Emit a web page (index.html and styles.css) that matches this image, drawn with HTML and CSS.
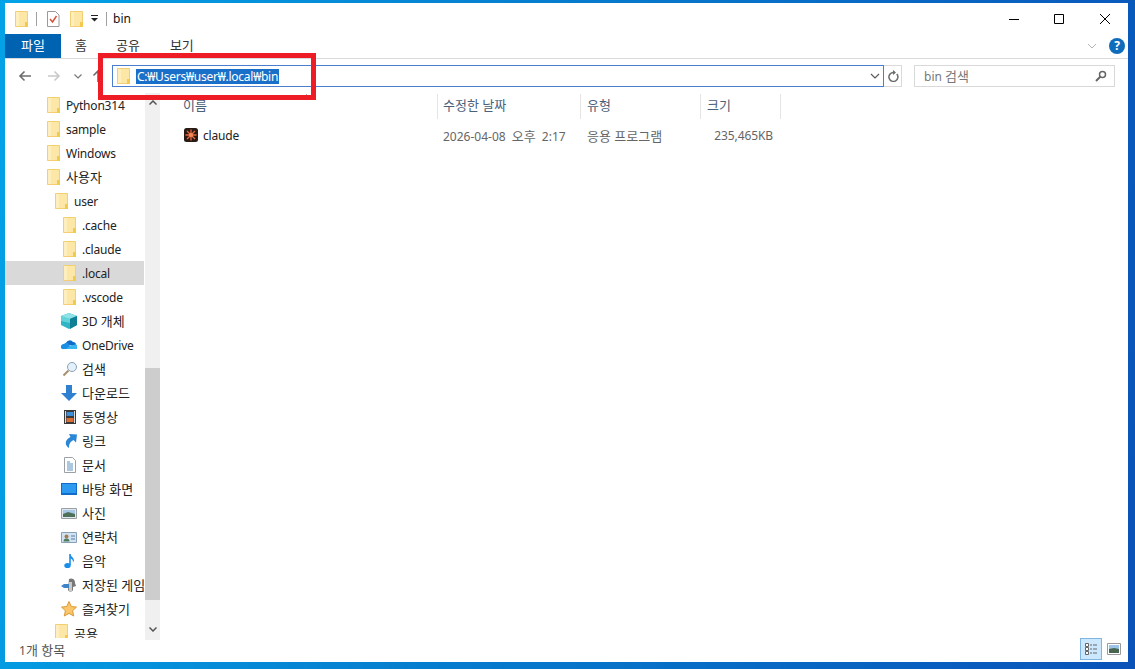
FILE: index.html
```html
<!DOCTYPE html>
<html lang="ko">
<head>
<meta charset="utf-8">
<title>bin</title>
<link rel="stylesheet" href="styles.css">
</head>
<body>
<svg class="defs" width="0" height="0" aria-hidden="true">
  <symbol id="folder" viewBox="0 0 16 16">
    <path d="M1.500.5h12v15h-12z" fill="#fde7a6" stroke="#f1cf72"/>
    <path d="M11 11h3v5h-3z" fill="#f5c94f"/>
    <path d="M2 1h3v14H2z" fill="#ffefbf"/>
  </symbol>
</svg>
<div class="window">
  <header class="titlebar">
    <svg class="ico folder-t"><use href="#folder"/></svg>
    <span class="tsep"></span>
    <svg class="ico doc-t" viewBox="0 0 16 16"><path d="M2.500.5h8l3.500 3.500v11.500H2.500z" fill="#fff" stroke="#9a9a9a"/><path d="M5 8l2.500 3L11.500 5" fill="none" stroke="#d8503a" stroke-width="1.400"/></svg>
    <svg class="ico folder-t"><use href="#folder"/></svg>
    <svg class="qdrop" viewBox="0 0 9 7"><path d="M1 0h7v1H1z" fill="#222"/><path d="M1 3h7L4.500 6.500z" fill="#222"/></svg>
    <span class="tsep"></span>
    <span class="wintitle">bin</span>
    <div class="winctl">
      <svg class="ctl" viewBox="0 0 10 10"><path d="M0 5.500h10" stroke="#000" fill="none"/></svg>
      <svg class="ctl ctl-max" viewBox="0 0 10 10"><path d="M.5.500h9v9h-9z" stroke="#000" fill="none"/></svg>
      <svg class="ctl" viewBox="0 0 10 10"><path d="M0 0l10 10M10 0L0 10" stroke="#000" fill="none"/></svg>
    </div>
  </header>
  <nav class="ribbon">
    <span class="tab tab-file ko">파일</span>
    <span class="tab tab-home ko">홈</span>
    <span class="tab tab-share ko">공유</span>
    <span class="tab tab-view ko">보기</span>
    <svg class="rib-chev" viewBox="0 0 10 6"><path d="M1 1l4 4 4-4" fill="none" stroke="#b4b4b4"/></svg>
    <span class="help">?</span>
  </nav>
  <div class="addrbar">
    <svg class="navbtn back" viewBox="0 0 14 12"><path d="M13 6H2M6.500 1.500L2 6l4.500 4.500" fill="none" stroke="#6d6d6d" stroke-width="1.600"/></svg>
    <svg class="navbtn fwd" viewBox="0 0 14 12"><path d="M1 6h11M7.500 1.500L12 6l-4.500 4.500" fill="none" stroke="#c9c9c9" stroke-width="1.600"/></svg>
    <svg class="navbtn down" viewBox="0 0 8 5"><path d="M.5.500L4 4 7.500.5" fill="none" stroke="#777" stroke-width="1.200"/></svg>
    <svg class="navbtn up" viewBox="0 0 12 14"><path d="M6 13V2M1.500 6.500L6 2l4.500 4.500" fill="none" stroke="#6d6d6d" stroke-width="1.600"/></svg>
    <div class="addr">
      <svg class="ico folder-a"><use href="#folder"/></svg>
      <span class="path">C:₩Users₩user₩.local₩bin</span>
      <svg class="addr-chev" viewBox="0 0 10 6"><path d="M1 1l4 4 4-4" fill="none" stroke="#555" stroke-width="1.100"/></svg>
    </div>
    <div class="refresh">
      <svg viewBox="0 0 12 12" class="ref-ico"><path d="M9.800 4A4.500 4.500 0 1 1 6 2.500H8" fill="none" stroke="#6d6d6d" stroke-width="1.500"/><path d="M6 0l3 2.500L6 5z" fill="#6d6d6d"/></svg>
    </div>
    <div class="search">
      <span class="search-text">bin <span class="ko">검색</span></span>
      <svg class="search-ico" viewBox="0 0 12 12"><circle cx="7.500" cy="4.500" r="3" fill="none" stroke="#666" stroke-width="1.500"/><path d="M5.500 6.500L1 11" stroke="#666" stroke-width="2"/></svg>
    </div>
  </div>
  <div class="main">
    <aside class="nav">
      <ul class="tree">
        <li class="row l1"><svg class="ico"><use href="#folder"/></svg><span class="lat">Python314</span></li>
        <li class="row l1"><svg class="ico"><use href="#folder"/></svg><span class="lat">sample</span></li>
        <li class="row l1"><svg class="ico"><use href="#folder"/></svg><span class="lat">Windows</span></li>
        <li class="row l1"><svg class="ico"><use href="#folder"/></svg><span class="ko">사용자</span></li>
        <li class="row l2"><svg class="ico"><use href="#folder"/></svg><span class="lat">user</span></li>
        <li class="row l3"><svg class="ico"><use href="#folder"/></svg><span class="lat">.cache</span></li>
        <li class="row l3"><svg class="ico"><use href="#folder"/></svg><span class="lat">.claude</span></li>
        <li class="row l3 sel"><svg class="ico"><use href="#folder"/></svg><span class="lat">.local</span></li>
        <li class="row l3"><svg class="ico"><use href="#folder"/></svg><span class="lat">.vscode</span></li>
        <li class="row l3"><svg class="ico wide" viewBox="0 0 16 16"><path d="M8 0l8 3v9l-8 4-8-4V3z" fill="#2fb5c4"/><path d="M8 0l8 3-8 3-8-3z" fill="#8fe3e6"/><path d="M9 6l7-3v9l-7 4z" fill="#0f7f95"/><path d="M0 3l9 3v4L0 8z" fill="#63d3da"/></svg><span class="mix">3D <span class="ko">개체</span></span></li>
        <li class="row l3"><svg class="ico wide" viewBox="0 0 16 16"><path d="M5 6a4 4 0 0 1 7-1 3 3 0 0 1 3 3H6z" fill="#0f6cc8"/><path d="M0 11a3 3 0 0 1 3-4 4 4 0 0 1 4-1l4 6H2a2 2 0 0 1-2-1z" fill="#1a8fe3"/><path d="M5 12l5-4h3a2.500 2.500 0 0 1 3 4z" fill="#38b6f2"/></svg><span class="lat">OneDrive</span></li>
        <li class="row l3"><svg class="ico" viewBox="0 0 16 16"><circle cx="10" cy="6" r="4.500" fill="#e4f1fa" stroke="#8aa2b5"/><path d="M6.500 9.500L1.500 14.500" stroke="#a68f6f" stroke-width="2"/></svg><span class="ko">검색</span></li>
        <li class="row l3"><svg class="ico wide" viewBox="0 0 16 16"><path d="M5 0h6v8h5l-8 8-8-8h5z" fill="#2f80d0"/></svg><span class="ko">다운로드</span></li>
        <li class="row l3"><svg class="ico" viewBox="0 0 16 16"><path d="M2 1h12v14H2z" fill="#3a3a3a"/><path d="M4.500 3h7v4h-7z" fill="#3f8fd8"/><path d="M4.500 9h7v4h-7z" fill="#d8703a"/><path d="M3 2h1v12H3zM12 2h1v12h-1z" fill="#ddd"/></svg><span class="ko">동영상</span></li>
        <li class="row l3"><svg class="ico" viewBox="0 0 16 16"><path d="M7 1l8 .5-1 8-2.500-2.500C8 9 7 11 7 15 3 13 2 7 8.500 4z" fill="#2b86d6"/></svg><span class="ko">링크</span></li>
        <li class="row l3"><svg class="ico" viewBox="0 0 16 16"><path d="M2.500.5h8l3 3v12h-11z" fill="#fff" stroke="#9aa0a6"/><path d="M5 5h3M5 7h6M5 9h6M5 11h6M5 13h6" stroke="#5a8fc0"/></svg><span class="ko">문서</span></li>
        <li class="row l3"><svg class="ico wide" viewBox="0 0 16 16"><path d="M0 2h16v12H0z" fill="#0f6cc8"/><path d="M1 3h14v9H1z" fill="#2b9af0"/></svg><span class="ko">바탕 화면</span></li>
        <li class="row l3"><svg class="ico wide" viewBox="0 0 16 16"><path d="M.5 3.500h15v10H.5z" fill="#dfe7ef" stroke="#9a9fa5"/><path d="M2 5h12v4H2z" fill="#a8c8e8"/><path d="M2 9l5-2 7 2v3H2z" fill="#4f7058"/></svg><span class="ko">사진</span></li>
        <li class="row l3"><svg class="ico wide" viewBox="0 0 16 16"><path d="M.5 3.500h15v10H.5z" fill="#cfe3f5" stroke="#8aa0b5"/><circle cx="5.500" cy="7.500" r="2" fill="#a67a50"/><path d="M2.500 12.500a3 3 0 0 1 6 0z" fill="#4f7c5a"/><path d="M10 7h4M10 10h4" stroke="#5a7a9a"/></svg><span class="ko">연락처</span></li>
        <li class="row l3"><svg class="ico" viewBox="0 0 16 16"><path d="M8 1v11" stroke="#1b8fe8" stroke-width="1.600"/><ellipse cx="5.500" cy="12.500" rx="3.200" ry="2.600" fill="#1b8fe8"/><path d="M8 1c1 3 4 3 4 7l-1 1c0-3-2-3-3-4z" fill="#1b8fe8"/></svg><span class="ko">음악</span></li>
        <li class="row l3"><svg class="ico wide" viewBox="0 0 16 16"><path d="M8 2a4 4 0 0 1 6 4l1 3-3 1v3c-1 2-4 2-5 0z" fill="#777"/><path d="M0 9l3-2h5v4H3z" fill="#3f84c8"/><path d="M8 5h3v9H8z" fill="#c9c9c9"/></svg><span class="ko">저장된 게임</span></li>
        <li class="row l3"><svg class="ico wide" viewBox="0 0 16 16"><path d="M8 .5l2.300 5 5.200.6-3.900 3.600 1.100 5.300L8 12.400 3.300 15l1.100-5.300L.5 6.100l5.200-.6z" fill="#fbc56a" stroke="#d99a3a"/></svg><span class="ko">즐겨찾기</span></li>
        <li class="row l2 last"><svg class="ico"><use href="#folder"/></svg><span class="ko">공용</span></li>
      </ul>
      <div class="scroll">
        <svg class="sarrow" viewBox="0 0 8 5"><path d="M.5 4.500L4 1l3.500 3.500" fill="none" stroke="#555" stroke-width="1.500"/></svg>
        <div class="thumb"></div>
        <svg class="sarrow" viewBox="0 0 8 5"><path d="M.5.500L4 4 7.500.5" fill="none" stroke="#555" stroke-width="1.500"/></svg>
      </div>
    </aside>
    <section class="list">
      <div class="lhead">
        <span class="hcell"><span class="ko">이름</span><svg class="sort" viewBox="0 0 7 4"><path d="M.5 3.500L3.500.5l3 3" fill="none" stroke="#888"/></svg></span>
        <span class="hcell ko">수정한 날짜</span>
        <span class="hcell ko">유형</span>
        <span class="hcell ko">크기</span>
      </div>
      <div class="lrow">
        <span class="cell name">
          <svg class="app" viewBox="0 0 14 14"><rect width="14" height="14" rx="2.500" fill="#2a1a14"/><path d="M7 1.500v11M1.500 7h11M3 3l8 8M11 3l-8 8" stroke="#e8683a" stroke-width="1.300"/><circle cx="7" cy="7" r="2" fill="#f08a5a"/></svg>
          <span class="lat">claude</span>
        </span>
        <span class="cell date">2026-04-08 <span class="ko">오후</span> 2:17</span>
        <span class="cell ko">응용 프로그램</span>
        <span class="cell size">235,465KB</span>
      </div>
    </section>
  </div>
  <footer class="status">
    <span>1<span class="ko">개 항목</span></span>
    <div class="views">
      <span class="view active">
        <svg viewBox="0 0 16 16" class="vico"><path d="M2.500 2.500h3v3h-3zM2.500 6.500h3v3h-3zM2.500 10.500h3v3h-3z" fill="#fff" stroke="#666"/><path d="M7 4h2M10 4h4M7 8h2M10 8h4M7 12h2M10 12h4" stroke="#666"/></svg>
      </span>
      <span class="view">
        <svg viewBox="0 0 16 16" class="vico"><path d="M1.500 2.500h13v11h-13z" fill="#fff" stroke="#9a9a9a"/><path d="M3 4h10v4H3z" fill="#9cc4e8"/><path d="M3 8l5-1 5 1v4H3z" fill="#47654f"/></svg>
      </span>
    </div>
  </footer>
  <div class="redbox"></div>
</div>
</body>
</html>
```
FILE: styles.css
```css
* { box-sizing: border-box; }
html, body { height: 100%; }
body {
  margin: 0;
  padding: 3px 7px 7px 5px;
  overflow: hidden;
  background: linear-gradient(100deg, #03a3e8 0%, #0680d0 40%, #0a52b8 100%);
  font-family: "Noto Sans", "Noto Sans CJK KR", sans-serif;
  font-size: 12px;
  color: #222;
}
.defs { position: absolute; }
.ko { font-size: 13px; letter-spacing: 0; }
.lat { letter-spacing: -.2px; }
.window {
  position: relative;
  height: 100%;
  background: #fff;
  display: flex;
  flex-direction: column;
}
.ico { width: 16px; height: 16px; flex: none; }
.ico.wide { margin-left: -1px; margin-right: 1px; }

.titlebar {
  height: 31px;
  flex: none;
  display: flex;
  align-items: center;
  padding-left: 9px;
}
.tsep { width: 1px; height: 14px; background: #a0a0a0; margin: 0 8px 0 6px; }
.qdrop + .tsep { margin-left: 7px; }
.doc-t { margin-right: 8px; }
.qdrop { width: 9px; height: 7px; margin-left: 5px; }
.wintitle { color: #111; margin-left: -2px; }
.winctl {
  margin-left: auto;
  display: flex;
  gap: 35px;
  padding-right: 18px;
}
.ctl { width: 10px; height: 10px; display: block; }
.ctl-max { margin-right: 1px; }

.ribbon {
  height: 25px;
  flex: none;
  display: flex;
  align-items: center;
  border-bottom: 1px solid #dadbdc;
}
.tab { color: #333; margin-bottom: 4px; }
.tab-file {
  width: 56px;
  height: 24px;
  line-height: 23px;
  text-align: center;
  background: #0063b1;
  color: #fff;
  margin-bottom: 0;
}
.tab-home { margin-left: 14px; }
.tab-share { margin-left: 29px; }
.tab-view { margin-left: 30px; }
.rib-chev { width: 10px; height: 6px; margin-left: auto; margin-right: 12px; }
.help {
  width: 16px;
  height: 16px;
  margin-right: 3px;
  border-radius: 50%;
  background: #0f6cbd;
  color: #fff;
  font-weight: 700;
  font-size: 12px;
  line-height: 16px;
  text-align: center;
}

.addrbar {
  height: 34px;
  flex: none;
  display: flex;
  align-items: center;
}
.navbtn { flex: none; }
.back { width: 14px; height: 12px; margin-left: 13px; }
.fwd { width: 14px; height: 12px; margin-left: 15px; }
.down { width: 8px; height: 5px; margin-left: 13px; }
.up { width: 12px; height: 14px; margin-left: 10px; }
.addr {
  width: 772px;
  height: 22px;
  margin-left: 8px;
  border: 1px solid #4a7fd0;
  display: flex;
  align-items: center;
  padding-left: 3px;
}
.folder-a { margin-right: 4px; }
.path {
  background: #1a70c9;
  color: #fff;
  padding: 0 1px;
  height: 15px;
  line-height: 15px;
  letter-spacing: -.24px;
}
.addr-chev { width: 10px; height: 6px; margin-left: auto; margin-right: 3px; }
.refresh {
  width: 18px;
  height: 22px;
  border: 1px solid #dadada;
  border-left: 0;
  display: flex;
  align-items: center;
  justify-content: center;
}
.ref-ico { width: 12px; height: 12px; }
.search {
  width: 201px;
  height: 22px;
  margin-left: 12px;
  border: 1px solid #d9d9d9;
  display: flex;
  align-items: center;
  justify-content: space-between;
  padding: 0 7px 0 9px;
  color: #777;
}
.search-text { margin-bottom: 2px; }
.search-ico { width: 12px; height: 12px; }

.main { flex: 1; min-height: 0; display: flex; }
.nav { width: 155px; flex: none; display: flex; overflow: hidden; }
.tree {
  list-style: none;
  margin: 0;
  padding: 0;
  width: 140px;
  flex: none;
  overflow: hidden;
}
.row {
  width: 139px;
  height: 24px;
  display: flex;
  align-items: center;
  gap: 4px;
  white-space: nowrap;
  color: #222;
  overflow: hidden;
}
.row > .ko, .row > .mix { margin-bottom: 2px; }
.last { height: 17px; align-items: flex-start; padding-top: 3px; }
.l1 { padding-left: 41px; }
.l2 { padding-left: 49px; }
.l3 { padding-left: 57px; }
.sel { background: #d9d9d9; }
.scroll {
  width: 15px;
  flex: none;
  background: #f0f0f0;
  display: flex;
  flex-direction: column;
  align-items: center;
}
.sarrow { width: 8px; height: 5px; flex: none; margin: 7px 0 8px; }
.thumb {
  width: 100%;
  height: 232px;
  flex: none;
  margin-top: auto;
  margin-bottom: 20px;
  background: #cdcdcd;
}

.list { flex: 1; padding-left: 18px; }
.lhead, .lrow {
  display: grid;
  grid-template-columns: 260px 143px 120px 80px;
}
.lhead { height: 26px; align-items: center; }
.hcell {
  position: relative;
  height: 25px;
  line-height: 23px;
  padding-left: 6px;
  color: #4c607a;
  border-right: 1px solid #e5e5e5;
}
.hcell:nth-child(-n+2) { padding-left: 5px; }
.sort {
  position: absolute;
  left: 125px;
  top: 0;
  width: 7px;
  height: 4px;
}
.lrow { height: 24px; margin-top: 4px; align-items: center; color: #666; }
.cell { padding-left: 6px; white-space: nowrap; }
.date { padding-left: 5px; word-spacing: 3px; }
.name { display: flex; align-items: center; gap: 5px; color: #222; }
.app { width: 14px; height: 14px; }
.size { text-align: right; padding-right: 8px; letter-spacing: -.1px; }

.status {
  height: 22px;
  flex: none;
  display: flex;
  align-items: center;
  justify-content: space-between;
  padding-left: 14px;
  color: #555;
}
.status > * { margin-bottom: 4px; }
.views { display: flex; gap: 1px; padding-right: 3px; }
.view {
  width: 22px;
  height: 22px;
  display: flex;
  align-items: center;
  justify-content: center;
}
.view.active { background: #cce8ff; border: 1px solid #7fb5e0; }
.vico { width: 16px; height: 16px; }

.redbox {
  position: absolute;
  left: 93px;
  top: 50px;
  width: 218px;
  height: 47px;
  border: 5px solid #ee1c25;
}
```
